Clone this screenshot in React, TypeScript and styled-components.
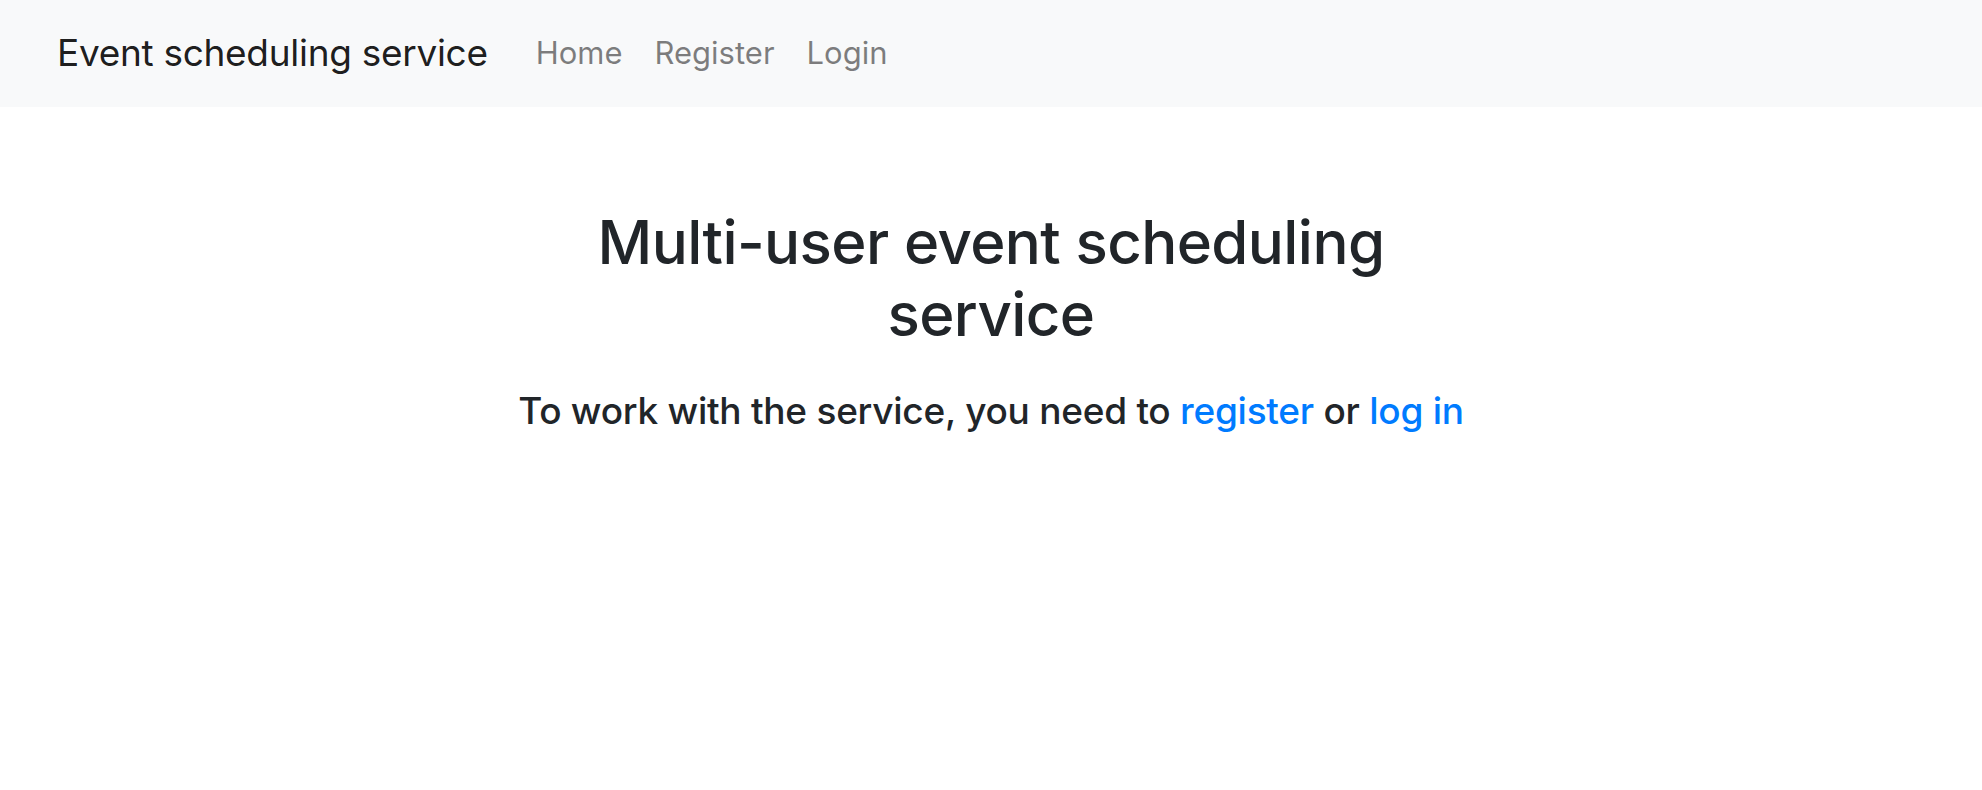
import React from 'react'
import styled, { createGlobalStyle } from 'styled-components'

const GlobalStyle = createGlobalStyle`
  body {
    margin: 0;
    font-family: Inter, "Noto Sans", sans-serif;
    color: #212529;
    background: #fff;
  }
  * {
    box-sizing: border-box;
  }
`

const NavBar = styled.nav`
  display: flex;
  align-items: center;
  height: 107px;
  padding: 0 57px 2px;
  background: #f8f9fa;
`

const Brand = styled.a`
  font-size: 37px;
  color: rgba(0, 0, 0, 0.9);
  text-decoration: none;
  margin-right: 32px;
  letter-spacing: -0.3px;
`

const NavLinks = styled.div`
  display: flex;
  align-items: center;
`

const NavLink = styled.a`
  font-size: 31px;
  color: rgba(0, 0, 0, 0.5);
  text-decoration: none;
  padding: 0 16px;
`

const Main = styled.main`
  display: flex;
  flex-direction: column;
  align-items: center;
  padding-top: 99px;
  text-align: center;
`

const Title = styled.h1`
  margin: 0;
  width: 820px;
  font-size: 60px;
  font-weight: 500;
  line-height: 72px;
  letter-spacing: -0.6px;
`

const Lead = styled.p`
  margin: 39px 0 0;
  font-size: 37px;
  font-weight: 500;
  line-height: 1.2;
  letter-spacing: -0.25px;
`

const TextLink = styled.a`
  color: #007bff;
  text-decoration: none;
`

const App = () => {
  return (
    <>
      <GlobalStyle />
      <NavBar>
        <Brand href="#">Event scheduling service</Brand>
        <NavLinks>
          <NavLink href="#">Home</NavLink>
          <NavLink href="#">Register</NavLink>
          <NavLink href="#">Login</NavLink>
        </NavLinks>
      </NavBar>
      <Main>
        <Title>Multi-user event scheduling service</Title>
        <Lead>
          To work with the service, you need to <TextLink href="#">register</TextLink> or{' '}
          <TextLink href="#">log in</TextLink>
        </Lead>
      </Main>
    </>
  )
}

export default App
